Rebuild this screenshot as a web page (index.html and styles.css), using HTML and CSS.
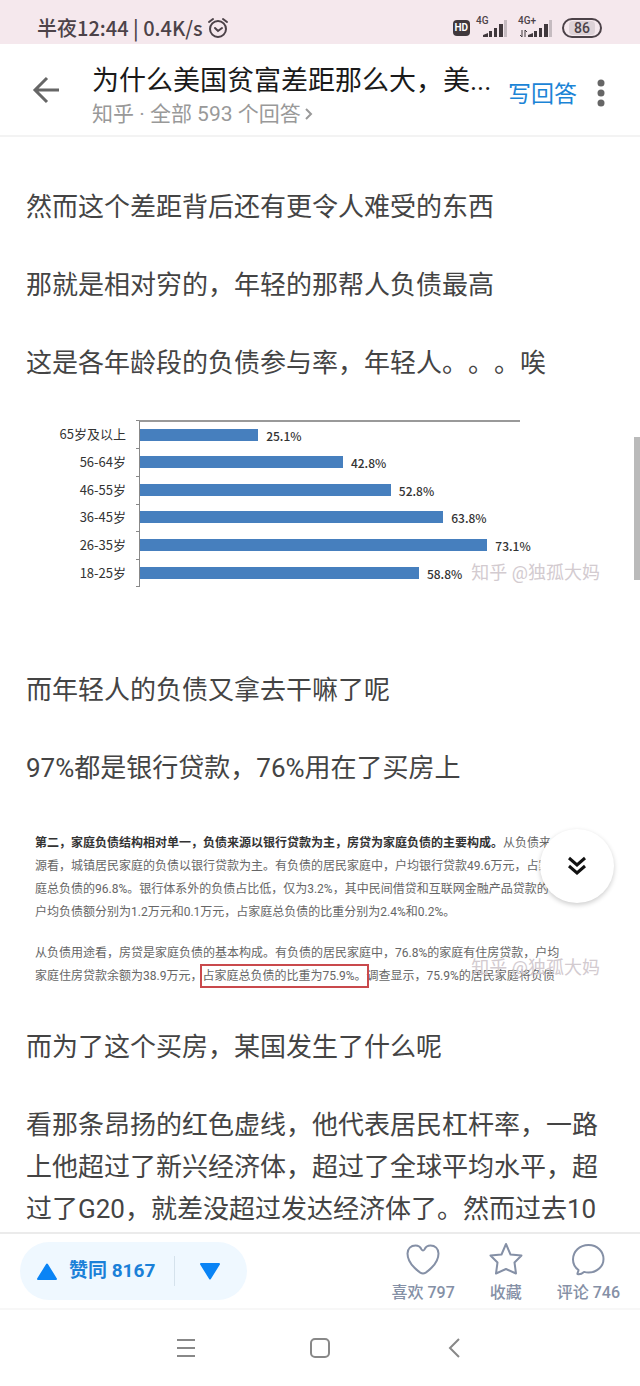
FILE: index.html
```html
<!DOCTYPE html>
<html lang="zh-CN">
<head>
<meta charset="utf-8">
<meta name="viewport" content="width=device-width, initial-scale=1">
<title>为什么美国贫富差距那么大</title>
<link rel="stylesheet" href="styles.css">
</head>
<body>
<div class="screen">
  <div class="status">
    <span class="status-time">半夜12:44 | 0.4K/s</span>
    <svg class="alarm" width="22" height="22" viewBox="0 0 22 22" fill="none" stroke="#4c4248" stroke-width="2" stroke-linecap="round" aria-hidden="true">
      <circle cx="11" cy="12" r="8"/><path d="M8 11l3 3 4-3M2 5l4-3M20 5l-4-3"/>
    </svg>
    <span class="hd">HD</span>
    <span class="signal">
      <span class="net">4G</span>
      <svg width="32" height="20" viewBox="0 0 32 20" aria-hidden="true"><path fill="#40383c" d="M7 19v-2l5-2v4zM13 13h3v6h-3zM18 10h3v9h-3zM23 6h4v13h-4z"/><path fill="#c5bbc0" d="M28 2h3v17h-3z"/></svg>
    </span>
    <span class="signal signal-second">
      <span class="net">4G+</span>
      <svg width="36" height="20" viewBox="0 0 36 20" aria-hidden="true"><path fill="#40383c" d="M10 19v-2l5-2v4zM16 13h3v6h-3zM21 10h3v9h-3zM26 6h4v13h-4z"/><path fill="#c5bbc0" d="M31 2h3v17h-3z"/><path d="M4 12v7l-2-2M7 19v-7l2 2" fill="none" stroke="#40383c"/></svg>
    </span>
    <span class="battery"><span class="battery-level">86</span></span>
  </div>

  <header class="header">
    <button class="icon-button" aria-label="返回">
      <svg width="28" height="28" viewBox="0 0 28 28" fill="none" stroke="#666" stroke-width="3" aria-hidden="true"><path d="M27 14H3M15 2L3 14l12 12"/></svg>
    </button>
    <div class="heading">
      <h1 class="title">为什么美国贫富差距那么大，美...</h1>
      <a class="subtitle" href="#answers">知乎 · 全部 593 个回答
        <svg width="8" height="12" viewBox="0 0 8 12" fill="none" stroke="#999" stroke-width="2" aria-hidden="true"><path d="M1 1l5 5-5 5"/></svg>
      </a>
    </div>
    <a class="write" href="#write">写回答</a>
    <button class="icon-button more" aria-label="更多">
      <svg width="8" height="28" viewBox="0 0 8 28" fill="#666" aria-hidden="true"><circle cx="4" cy="4" r="3.5"/><circle cx="4" cy="14" r="3.5"/><circle cx="4" cy="24" r="3.5"/></svg>
    </button>
  </header>

  <main class="article" id="answers">
    <p>然而这个差距背后还有更令人难受的东西</p>
    <p>那就是相对穷的，年轻的那帮人负债最高</p>
    <p>这是各年龄段的负债参与率，年轻人。。。唉</p>

    <figure class="chart">
      <div class="row"><span class="label">65岁及以上</span><i class="tick"></i><div class="plot"><span class="bar" style="width:31.1%"></span><span class="value">25.1%</span></div></div>
      <div class="row"><span class="label">56-64岁</span><i class="tick"></i><div class="plot"><span class="bar" style="width:53.4%"></span><span class="value">42.8%</span></div></div>
      <div class="row"><span class="label">46-55岁</span><i class="tick"></i><div class="plot"><span class="bar" style="width:66%"></span><span class="value">52.8%</span></div></div>
      <div class="row"><span class="label">36-45岁</span><i class="tick"></i><div class="plot"><span class="bar" style="width:79.8%"></span><span class="value">63.8%</span></div></div>
      <div class="row"><span class="label">26-35岁</span><i class="tick"></i><div class="plot"><span class="bar" style="width:91.4%"></span><span class="value">73.1%</span></div></div>
      <div class="row"><span class="label">18-25岁</span><i class="tick tick-last"></i><div class="plot"><span class="bar" style="width:73.4%"></span><span class="value">58.8%</span></div></div>
      <figcaption class="watermark">知乎 @独孤大妈</figcaption>
    </figure>

    <p>而年轻人的负债又拿去干嘛了呢</p>
    <p>97%都是银行贷款，76%用在了买房上</p>

    <figure class="excerpt">
      <p><b>第二，家庭负债结构相对单一，负债来源以银行贷款为主，房贷为家庭负债的主要构成。</b>从负债来<br>源看，城镇居民家庭的负债以银行贷款为主。有负债的居民家庭中，户均银行贷款49.6万元，占家<br>庭总负债的96.8%。银行体系外的负债占比低，仅为3.2%，其中民间借贷和互联网金融产品贷款的<br>户均负债额分别为1.2万元和0.1万元，占家庭总负债的比重分别为2.4%和0.2%。</p>
      <p>从负债用途看，房贷是家庭负债的基本构成。有负债的居民家庭中，76.8%的家庭有住房贷款，户均<br>家庭住房贷款余额为38.9万元，<mark>占家庭总负债的比重为75.9%。</mark>调查显示，75.9%的居民家庭将负债</p>
      <figcaption class="watermark">知乎 @独孤大妈</figcaption>
      <button class="next" aria-label="下一个回答">
        <svg width="18" height="20" viewBox="0 0 18 20" fill="none" stroke="#111" stroke-width="3" aria-hidden="true"><path d="M1 2l8 7 8-7M1 10l8 7 8-7"/></svg>
      </button>
    </figure>

    <p>而为了这个买房，某国发生了什么呢</p>
    <p>看那条昂扬的红色虚线，他代表居民杠杆率，一路上他超过了新兴经济体，超过了全球平均水平，超过了G20，就差没超过发达经济体了。然而过去10</p>
    <span class="scroll-thumb"></span>
  </main>

  <footer class="actions">
    <div class="vote">
      <button class="up"><svg width="20" height="17" viewBox="0 0 20 17" fill="#0a84f5" stroke="#0a84f5" stroke-width="2" stroke-linejoin="round" aria-hidden="true"><path d="M10 1.500L19 16H1z"/></svg>赞同 8167</button>
      <button class="down" aria-label="反对"><svg width="20" height="17" viewBox="0 0 20 17" fill="#0a84f5" stroke="#0a84f5" stroke-width="2" stroke-linejoin="round" aria-hidden="true"><path d="M10 15.500L19 1H1z"/></svg></button>
    </div>
    <div class="tools">
      <button class="tool"><svg width="34" height="34" viewBox="0 0 34 34" aria-hidden="true"><path d="M17 31.500C15 31.500 1.500 23 1.500 11.500 1.500 6.500 5 3.500 9.500 3.500c3 0 5 1.500 6 4q1.500 2 3 0c1-2.500 3-4 6-4 4.500 0 8 3 8 8C32.500 23 19 31.500 17 31.500z"/></svg>喜欢 797</button>
      <button class="tool"><svg width="34" height="34" viewBox="0 0 34 34" aria-hidden="true"><path d="M17 2l4.500 10.500L32.500 13.500 25.500 20.500l1.500 11-10-4.500-10 4.500 1.500-11L1.500 13.500l11-1z"/></svg>收藏</button>
      <button class="tool"><svg width="34" height="34" viewBox="0 0 34 34" aria-hidden="true"><path d="M7.500 28C4 25.500 2 22 2 17.500 2 9.500 8.500 3 17.500 3S32.500 9.500 32.500 17 26 30.500 17.500 30.500c-1.500 0-3-.2-4.500-.6-2 1.700-4.500 2.600-6.500 2.100-.5-1 1-2 1-4z"/></svg>评论 746</button>
    </div>
  </footer>

  <nav class="system-nav">
    <button class="icon-button" aria-label="任务"><svg width="20" height="20" viewBox="0 0 20 20" aria-hidden="true"><path d="M1 2h18M1 10h18M1 18h18"/></svg></button>
    <button class="icon-button" aria-label="主页"><svg width="20" height="20" viewBox="0 0 20 20" aria-hidden="true"><rect x="1" y="1" width="18" height="18" rx="4"/></svg></button>
    <button class="icon-button" aria-label="后退"><svg width="20" height="20" viewBox="0 0 20 20" aria-hidden="true"><path d="M15 1L6 10l9 9"/></svg></button>
  </nav>
</div>
</body>
</html>
```
FILE: styles.css
```css
* { box-sizing: border-box; }

body {
  margin: 0;
  background: #fff;
  color: #444;
  font-family: Roboto, "Noto Sans CJK SC", sans-serif;
  text-spacing-trim: space-all;
}

p, h1, figure { margin: 0; }

button {
  border: 0;
  padding: 0;
  background: none;
  color: inherit;
  font: inherit;
}

a { text-decoration: none; }
svg { display: block; flex: none; }

.screen {
  display: flex;
  flex-direction: column;
  height: 100vh;
}

/* Status bar */
.status {
  display: flex;
  align-items: center;
  flex: none;
  height: 44px;
  padding: 12px 38px 0 37px;
  background: #f5e8ed;
  color: #4c4248;
}

.status-time {
  font: 500 20px/24px "Noto Sans CJK SC", sans-serif;
  white-space: nowrap;
}

.alarm { margin-left: 4px; }

.hd {
  margin-left: auto;
  padding: 0 2px;
  border-radius: 4px;
  background: #40383c;
  color: #fff;
  font: 700 10px/16px Roboto, sans-serif;
}

.signal {
  position: relative;
  margin-left: 6px;
}

.signal-second { margin-left: 10px; }

.net {
  position: absolute;
  top: -2px;
  left: 0;
  font: 500 10px/10px Roboto, sans-serif;
}

.battery {
  margin-left: 8px;
  padding: 1px 5px;
  border: 2px solid #4c4248;
  border-radius: 10px;
}

.battery-level {
  display: block;
  padding: 0 5px;
  border-radius: 4px;
  background: #ddd2d7;
  font: 500 14px/14px Roboto, sans-serif;
}

/* Header */
.header {
  display: flex;
  align-items: center;
  flex: none;
  height: 93px;
  padding: 0 35px 0 32px;
  border-bottom: 2px solid #f3f3f3;
}

.heading {
  flex: 1;
  min-width: 0;
  margin-left: 32px;
  padding-top: 12px;
}

.title {
  overflow: hidden;
  color: #1a1a1a;
  font-size: 27px;
  font-weight: 400;
  line-height: 36px;
  white-space: nowrap;
}

.subtitle {
  display: flex;
  align-items: center;
  gap: 4px;
  color: #999;
  font-size: 21px;
  line-height: 30px;
  white-space: nowrap;
}

.write {
  margin: 0 20px 0 12px;
  padding-top: 10px;
  color: #1b84d6;
  font-size: 23px;
  line-height: 32px;
  white-space: nowrap;
}

.more { padding-top: 6px; }

/* Article */
.article {
  position: relative;
  flex: 1;
  min-height: 0;
  overflow: hidden;
  padding: 49px 26px 0;
  font-size: 26px;
  line-height: 42px;
}

.article > p + p { margin-top: 36px; }

.chart {
  position: relative;
  display: grid;
  grid-auto-rows: 1fr;
  height: 167px;
  margin: 36px 0 82px;
  padding-right: 94px;
  line-height: 20px;
}

.row {
  display: grid;
  grid-template-columns: 110px 3px 1fr;
}

.label {
  align-self: center;
  padding-right: 10px;
  color: #333;
  font-size: 13px;
  font-family: "Noto Sans CJK SC", sans-serif;
  text-align: right;
}

.tick { border-top: 1px solid #888; }
.tick-last { border-bottom: 1px solid #888; }

.plot {
  display: flex;
  align-items: center;
  gap: 8px;
  border-left: 1px solid #888;
}

.row:first-child .plot { border-top: 2px solid #999; }

.bar {
  flex: none;
  height: 12px;
  background: #467fbe;
}

.value {
  padding-top: 2px;
  color: #333;
  font: 500 12px/20px "Noto Sans CJK SC", sans-serif;
}

.watermark {
  position: absolute;
  right: 14px;
  bottom: 0;
  color: #d3cbd0;
  font-size: 18px;
  line-height: 28px;
}

.excerpt {
  position: relative;
  margin: 43px 0 38px;
  padding-left: 9px;
  color: #666;
  font-size: 12px;
  line-height: 23px;
  white-space: nowrap;
}

.excerpt p + p { margin-top: 18px; }
.excerpt b { color: #333; }
.excerpt .watermark { bottom: 6px; }

.excerpt mark {
  padding: 3px 0;
  outline: 2px solid #c9494c;
  background: none;
  color: inherit;
}

.next {
  position: absolute;
  top: -3px;
  right: 0;
  display: grid;
  place-items: center;
  width: 74px;
  height: 74px;
  border-radius: 50%;
  background: #fff;
  box-shadow: 0 2px 5px rgba(0, 0, 0, .2);
}

.scroll-thumb {
  position: absolute;
  top: 300px;
  right: 0;
  width: 6px;
  height: 143px;
  background: #bababa;
}

/* Action bar */
.actions {
  display: flex;
  align-items: center;
  justify-content: space-between;
  flex: none;
  height: 78px;
  padding: 0 20px;
  border-top: 2px solid #ebebeb;
  border-bottom: 2px solid #f7f7f7;
}

.vote {
  display: flex;
  align-items: center;
  height: 58px;
  border-radius: 29px;
  background: #eff8ff;
  color: #1a80d8;
}

.up {
  display: flex;
  align-items: center;
  gap: 12px;
  padding: 0 19px 0 17px;
  border-right: 1px solid #d5e2ec;
  font-size: 19px;
  font-weight: 700;
  line-height: 30px;
}

.down { padding: 0 27px 0 25px; }

.tools {
  display: flex;
  gap: 34px;
  padding-top: 4px;
}

.tool {
  display: flex;
  flex-direction: column;
  align-items: center;
  gap: 5px;
  color: #8590a6;
  font-size: 16px;
  font-weight: 500;
  line-height: 24px;
}

.tool svg {
  fill: none;
  stroke: #8590a6;
  stroke-width: 2;
  stroke-linejoin: round;
}

/* System navigation */
.system-nav {
  display: flex;
  align-items: center;
  justify-content: center;
  gap: 114px;
  flex: none;
  height: 76px;
}

.system-nav svg {
  fill: none;
  stroke: #888;
  stroke-width: 2;
}
```
